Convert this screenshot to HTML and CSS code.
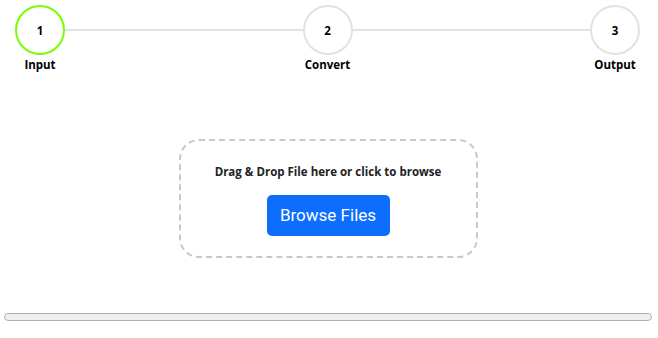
FILE: index.html
```html
<!DOCTYPE html>
<html>
<head>
<meta charset="utf-8">
<link rel="stylesheet" href="styles.css">
</head>
<body>
<div class="page">
  <div class="stepper">
    <div class="step">
      <div class="circle active">1</div>
      <div class="label">Input</div>
    </div>
    <div class="connector"></div>
    <div class="step">
      <div class="circle">2</div>
      <div class="label">Convert</div>
    </div>
    <div class="connector"></div>
    <div class="step">
      <div class="circle">3</div>
      <div class="label">Output</div>
    </div>
  </div>
  <div class="drop-wrap">
    <div class="dropzone">
      <p class="drop-text">Drag &amp; Drop File here or click to browse</p>
      <button class="browse">Browse Files</button>
    </div>
  </div>
  <div class="progress"></div>
</div>
</body>
</html>
```
FILE: styles.css
```css
* { box-sizing: border-box; }
html, body { margin: 0; padding: 0; background: #fff; }
body {
  font-family: "Open Sans", "Noto Sans", "DejaVu Sans", sans-serif;
  color: #111;
}
.page { width: 658px; height: 338px; }
.stepper {
  display: flex;
  align-items: flex-start;
  padding: 5px 18px 0 15px;
}
.step {
  width: 50px;
  display: flex;
  flex-direction: column;
  align-items: center;
}
.circle {
  width: 50px;
  height: 50px;
  border-radius: 50%;
  border: 2px solid #e2e2e2;
  display: flex;
  align-items: center;
  justify-content: center;
  font-size: 11.5px;
  font-weight: 700;
  color: #000;
  background: #fff;
}
.circle.active { border-color: #7cfc00; }
.label {
  font-size: 11.5px;
  font-weight: 700;
  margin-top: 1px;
  white-space: nowrap;
  line-height: 17px;
  color: #000;
}
.connector {
  flex: 1;
  height: 2px;
  background: #e2e2e2;
  margin-top: 24px;
}
.drop-wrap {
  display: flex;
  justify-content: center;
  padding: 66px 0 0 0;
  margin-left: -2px;
}
.dropzone {
  width: 299px;
  height: 119px;
  border: 2px dashed #c8c8c8;
  border-radius: 20px;
  display: flex;
  flex-direction: column;
  align-items: center;
  padding-top: 22px;
}
.drop-text {
  margin: 0;
  font-size: 11.5px;
  font-weight: 700;
  line-height: 17px;
  color: #222;
}
.browse {
  margin-top: 15px;
  background: #0d6efd;
  color: #fff;
  border: none;
  border-radius: 5px;
  height: 41px;
  width: 123px;
  padding: 0;
  font-family: "Roboto", "Open Sans", sans-serif;
  font-size: 17px;
  line-height: 41px;
  white-space: nowrap;
}
.progress {
  margin: 55px 0 0 4px;
  width: 648px;
  height: 8px;
  border: 1px solid #b0b0b0;
  border-radius: 4px;
  background: #efefef;
}
```
